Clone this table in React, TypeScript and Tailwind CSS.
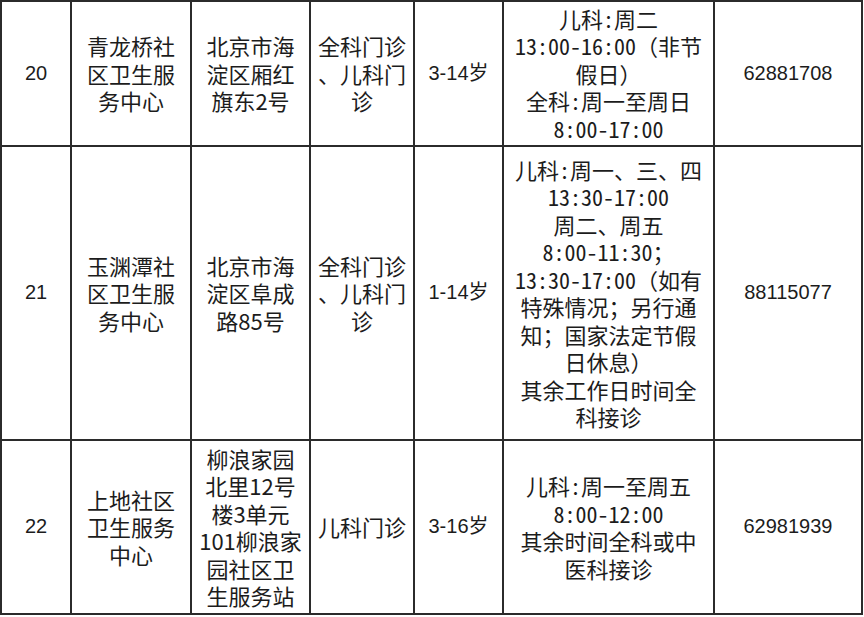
const rows = [
  {
    no: "20",
    name: ["青龙桥社", "区卫生服", "务中心"],
    addr: ["北京市海", "淀区厢红", "旗东2号"],
    dept: ["全科门诊", "、儿科门", "诊"],
    age: "3-14岁",
    time: ["儿科:周二", "13:00-16:00（非节", "假日）", "全科:周一至周日", "8:00-17:00"],
    phone: "62881708",
    h: "h-[145px]",
  },
  {
    no: "21",
    name: ["玉渊潭社", "区卫生服", "务中心"],
    addr: ["北京市海", "淀区阜成", "路85号"],
    dept: ["全科门诊", "、儿科门", "诊"],
    age: "1-14岁",
    time: [
      "儿科:周一、三、四",
      "13:30-17:00",
      "周二、周五",
      "8:00-11:30；",
      "13:30-17:00（如有",
      "特殊情况；另行通",
      "知；国家法定节假",
      "日休息）",
      "其余工作日时间全",
      "科接诊",
    ],
    phone: "88115077",
    h: "h-[294px]",
  },
  {
    no: "22",
    name: ["上地社区", "卫生服务", "中心"],
    addr: ["柳浪家园", "北里12号", "楼3单元", "101柳浪家", "园社区卫", "生服务站"],
    dept: ["儿科门诊"],
    age: "3-16岁",
    time: ["儿科:周一至周五", "8:00-12:00", "其余时间全科或中", "医科接诊"],
    phone: "62981939",
    h: "h-[174px]",
  },
];

// full-width punctuation keeps its normal width, digits go half-width
function Line({ text }: { text: string }) {
  const parts = text.split(/([（）；])/);
  return (
    <div className="whitespace-nowrap">
      {parts.map((p, i) =>
        /[（）；]/.test(p) ? (
          <span key={i} className="[font-feature-settings:normal]">
            {p}
          </span>
        ) : (
          <span key={i}>{p}</span>
        )
      )}
    </div>
  );
}

function Lines({ lines }: { lines: string[] }) {
  return (
    <>
      {lines.map((l, i) => (
        <Line key={i} text={l} />
      ))}
    </>
  );
}

const cell = "border-2 border-[#2b2b2b] text-center align-middle p-0";
const latin = "text-[20px] [font-family:'Liberation_Sans','Noto_Sans_CJK_SC',sans-serif]";
const cjk = "text-[22px] [font-family:'Noto_Sans_CJK_SC',sans-serif]";

export default function App() {
  return (
    <div className="w-[864px] h-[617px] bg-white overflow-hidden">
      <table className="table-fixed border-collapse w-[863px] text-[#1c1c1c] leading-[27.5px]">
        <colgroup>
          <col className="w-[70px]" />
          <col className="w-[120px]" />
          <col className="w-[119px]" />
          <col className="w-[104px]" />
          <col className="w-[89px]" />
          <col className="w-[211px]" />
          <col className="w-[148px]" />
        </colgroup>
        <tbody>
          {rows.map((r) => (
            <tr key={r.no} className={r.h}>
              <td className={`${cell} ${latin}`}>{r.no}</td>
              <td className={`${cell} ${cjk}`}>
                <Lines lines={r.name} />
              </td>
              <td className={`${cell} ${cjk}`}>
                <Lines lines={r.addr} />
              </td>
              <td className={`${cell} ${cjk}`}>
                <Lines lines={r.dept} />
              </td>
              <td className={`${cell} ${latin}`}>{r.age}</td>
              <td className={`${cell} ${cjk} [font-feature-settings:'hwid']`}>
                <Lines lines={r.time} />
              </td>
              <td className={`${cell} ${latin}`}>{r.phone}</td>
            </tr>
          ))}
        </tbody>
      </table>
    </div>
  );
}
